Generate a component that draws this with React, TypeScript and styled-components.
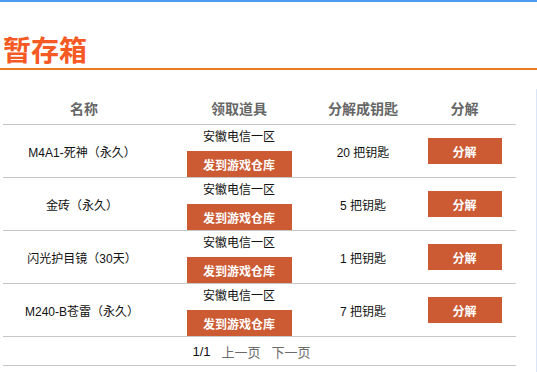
import React from "react";
import styled, { createGlobalStyle } from "styled-components";

const GlobalStyle = createGlobalStyle`
  html, body {
    margin: 0;
    padding: 0;
    background: #ffffff;
  }
  body {
    font-family: "Liberation Sans", "Noto Sans CJK SC", sans-serif;
    font-size: 12px;
    color: #111;
  }
`;

const Page = styled.div`
  width: 537px;
  height: 372px;
  overflow: hidden;
  position: relative;
  border-top: 2px solid #4b9bef;
  box-sizing: border-box;
`;

const SideStrip = styled.div`
  position: absolute;
  right: 0;
  top: 87px;
  bottom: 0;
  width: 1px;
  background: #dbe5f6;
`;

const Heading = styled.h1`
  margin: 0;
  height: 68px;
  box-sizing: border-box;
  padding: 32px 0 0 3px;
  border-bottom: 2px solid #ee7b1f;
  font-family: "Noto Sans CJK SC", sans-serif;
  font-size: 28px;
  line-height: 30px;
  font-weight: 700;
  color: #f65a24;
`;

const Table = styled.div`
  width: 513px;
  margin: 22px 0 0 3px;
`;

const Row = styled.div<{ $h: number }>`
  display: grid;
  grid-template-columns: 162px 148px 100px 103px;
  height: ${(p) => p.$h}px;
  border-bottom: 1px solid #c6c6c6;
`;

const HeadCell = styled.div`
  display: flex;
  align-items: center;
  justify-content: center;
  font-family: "Noto Sans CJK SC", sans-serif;
  font-size: 14px;
  font-weight: 700;
  color: #666;
  padding-bottom: 1px;
`;

const Cell = styled.div<{ $shift?: number }>`
  display: flex;
  align-items: center;
  justify-content: center;
  padding-right: ${(p) => p.$shift ?? 0}px;
  font-family: "Liberation Sans", "Noto Sans CJK SC", sans-serif;
  font-size: 12px;
  color: #111;
`;

const StackCell = styled.div`
  display: flex;
  flex-direction: column;
  align-items: center;
  justify-content: flex-end;
`;

const Server = styled.div`
  font-family: "Noto Sans CJK SC", sans-serif;
  font-size: 12px;
  line-height: 22px;
  margin-bottom: 4px;
  color: #111;
`;

const ActionButton = styled.button<{ $w: number }>`
  width: ${(p) => p.$w}px;
  height: 26px;
  border: none;
  padding: 0;
  background: #cc5a33;
  color: #fff;
  font-family: "Noto Sans CJK SC", sans-serif;
  font-size: 12px;
  font-weight: 700;
  cursor: pointer;
`;

const Pager = styled.div`
  height: 28px;
  border-bottom: 1px solid #c6c6c6;
  display: flex;
  align-items: center;
  justify-content: center;
  gap: 11px;
  padding-right: 16px;
  font-family: "Liberation Sans", "Noto Sans CJK SC", sans-serif;
  font-size: 13px;
`;

const PageLink = styled.span<{ $muted?: boolean }>`
  color: ${(p) => (p.$muted ? "#6b6b6b" : "#111")};
  cursor: ${(p) => (p.$muted ? "pointer" : "default")};
`;

const items = [
  { name: "M4A1-死神（永久）", keys: 20 },
  { name: "金砖（永久）", keys: 5 },
  { name: "闪光护目镜（30天）", keys: 1 },
  { name: "M240-B苍雷（永久）", keys: 7 },
];

export default function App() {
  return (
    <Page>
      <GlobalStyle />
      <SideStrip />
      <Heading>暂存箱</Heading>
      <Table>
        <Row $h={32}>
          <HeadCell>名称</HeadCell>
          <HeadCell>领取道具</HeadCell>
          <HeadCell>分解成钥匙</HeadCell>
          <HeadCell>分解</HeadCell>
        </Row>
        {items.map((it) => (
          <Row $h={52} key={it.name}>
            <Cell $shift={4}>{it.name}</Cell>
            <StackCell>
              <Server>安徽电信一区</Server>
              <ActionButton $w={105}>发到游戏仓库</ActionButton>
            </StackCell>
            <Cell>{it.keys} 把钥匙</Cell>
            <Cell>
              <ActionButton $w={74}>分解</ActionButton>
            </Cell>
          </Row>
        ))}
        <Pager>
          <PageLink>1/1</PageLink>
          <PageLink $muted>上一页</PageLink>
          <PageLink $muted>下一页</PageLink>
        </Pager>
      </Table>
    </Page>
  );
}
